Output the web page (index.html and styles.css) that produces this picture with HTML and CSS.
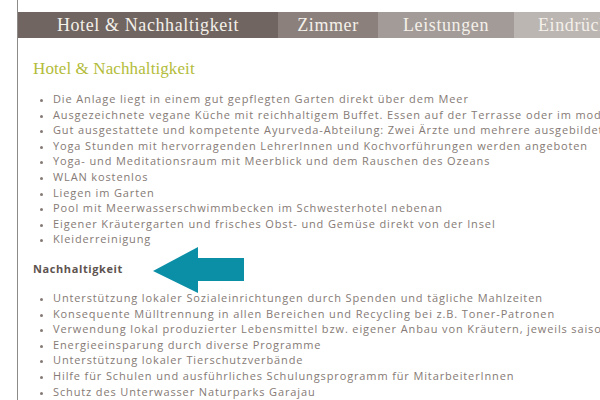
FILE: index.html
```html
<!DOCTYPE html>
<html lang="de">
<head>
<meta charset="utf-8">
<link rel="stylesheet" href="styles.css">
</head>
<body>
<div class="page">
  <nav class="nav">
    <div class="tab tab1">Hotel &amp; Nachhaltigkeit</div>
    <div class="tab tab2">Zimmer</div>
    <div class="tab tab3">Leistungen</div>
    <div class="tab tab4">Eindrücke</div>
  </nav>
  <main class="content">
    <h1 class="title">Hotel &amp; Nachhaltigkeit</h1>
    <ul class="list">
      <li>Die Anlage liegt in einem gut gepflegten Garten direkt über dem Meer</li>
      <li>Ausgezeichnete vegane Küche mit reichhaltigem Buffet. Essen auf der Terrasse oder im modernen Restaurant</li>
      <li>Gut ausgestattete und kompetente Ayurveda-Abteilung: Zwei Ärzte und mehrere ausgebildete Therapeuten</li>
      <li>Yoga Stunden mit hervorragenden LehrerInnen und Kochvorführungen werden angeboten</li>
      <li>Yoga- und Meditationsraum mit Meerblick und dem Rauschen des Ozeans</li>
      <li>WLAN kostenlos</li>
      <li>Liegen im Garten</li>
      <li>Pool mit Meerwasserschwimmbecken im Schwesterhotel nebenan</li>
      <li>Eigener Kräutergarten und frisches Obst- und Gemüse direkt von der Insel</li>
      <li>Kleiderreinigung</li>
    </ul>
    <div class="subhead">
      <h2 class="sub">Nachhaltigkeit</h2>
      <svg class="arrow" width="91" height="46" viewBox="0 0 91 46" aria-hidden="true">
        <polygon points="0,24 45,0 45,11 91,11 91,34 45,34 45,46" fill="#0b8fa7"/>
      </svg>
    </div>
    <ul class="list list2">
      <li>Unterstützung lokaler Sozialeinrichtungen durch Spenden und tägliche Mahlzeiten</li>
      <li>Konsequente Mülltrennung in allen Bereichen und Recycling bei z.B. Toner-Patronen</li>
      <li>Verwendung lokal produzierter Lebensmittel bzw. eigener Anbau von Kräutern, jeweils saisonal</li>
      <li>Energieeinsparung durch diverse Programme</li>
      <li>Unterstützung lokaler Tierschutzverbände</li>
      <li>Hilfe für Schulen und ausführliches Schulungsprogramm für MitarbeiterInnen</li>
      <li>Schutz des Unterwasser Naturparks Garajau</li>
    </ul>
  </main>
</div>
</body>
</html>
```
FILE: styles.css
```css
html, body {
  margin: 0;
  padding: 0;
  background: #ffffff;
  overflow: hidden;
}
.page {
  margin-left: 17px;
  border-left: 1px solid #8e8a88;
  min-height: 400px;
  padding-top: 12px;
  box-sizing: border-box;
}
.nav {
  display: flex;
  height: 26px;
  white-space: nowrap;
  overflow: hidden;
}
.tab {
  font-family: "Liberation Serif", "DejaVu Serif", serif;
  font-size: 18px;
  letter-spacing: 0.6px;
  color: #f4f0ea;
  line-height: 26px;
  text-align: center;
  flex: none;
}
.tab1 { width: 260px; background: #706560; }
.tab2 { width: 100px; background: #8b807b; }
.tab3 { width: 136px; background: #a39b97; }
.tab4 { width: 120px; background: #bcb6b2; text-align: left; padding-left: 24px; }
.content {
  padding-left: 15px;
  white-space: nowrap;
}
.title {
  font-family: "Liberation Serif", "DejaVu Serif", serif;
  font-weight: normal;
  font-size: 17px;
  color: #b3bc3a;
  margin: 20px 0 0 0;
  line-height: 22px;
  letter-spacing: 0.1px;
}
.list {
  margin: 11px 0 0 0;
  padding-left: 20px;
  font-family: "Open Sans", "DejaVu Sans", sans-serif;
  font-size: 11px;
  letter-spacing: 0.87px;
  line-height: 15.6px;
  color: #857a75;
}
.list li::marker {
  font-size: 9px;
}
.subhead {
  position: relative;
  margin-top: 14px;
  height: 16px;
}
.sub {
  font-family: "Open Sans", "DejaVu Sans", sans-serif;
  font-size: 11px;
  line-height: 16px;
  font-weight: bold;
  letter-spacing: 0.6px;
  color: #5e5450;
  margin: 0;
}
.arrow {
  position: absolute;
  left: 120px;
  top: -14px;
}
.list2 {
  margin-top: 13px;
}
```
